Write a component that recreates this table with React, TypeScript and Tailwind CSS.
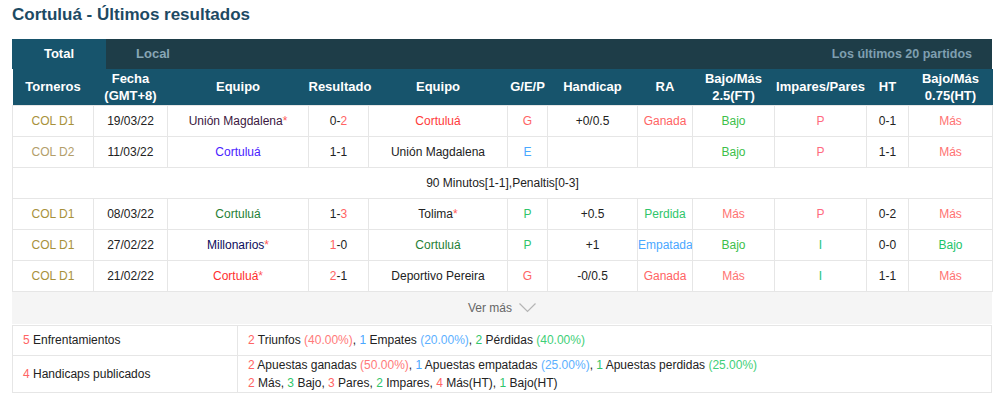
import React from "react";

type Cell = React.ReactNode;

const RED = "text-[#ff6464]";
const GREEN = "text-[#2fc56a]";
const BLUE = "text-[#4aa8ff]";

const cols = [81, 74, 141, 60, 139, 40, 90, 55, 82, 92, 42, 84];

function Star() {
  return <span className="text-[#ff5a5a]">*</span>;
}

interface Row {
  league: string;
  date: string;
  home: Cell;
  score: Cell;
  away: Cell;
  gep: Cell;
  handicap: string;
  ra: Cell;
  ou: Cell;
  oe: Cell;
  ht: string;
  ouHt: Cell;
  leagueColor: string;
}

const mas = <span className="text-[#ff7272]">Más</span>;
const bajo = <span className="text-[#3cbf4a]">Bajo</span>;

const rows: Row[] = [
  {
    league: "COL D1",
    leagueColor: "text-[#a8913a]",
    date: "19/03/22",
    home: (
      <span className="text-[#3b1740]">
        Unión Magdalena<Star />
      </span>
    ),
    score: (
      <>
        0-<span className={RED}>2</span>
      </>
    ),
    away: <span className="text-[#ff3a3a]">Cortuluá</span>,
    gep: <span className={RED}>G</span>,
    handicap: "+0/0.5",
    ra: <span className={RED}>Ganada</span>,
    ou: bajo,
    oe: <span className="text-[#ff6a80]">P</span>,
    ht: "0-1",
    ouHt: mas,
  },
  {
    league: "COL D2",
    leagueColor: "text-[#b39e6a]",
    date: "11/03/22",
    home: <span className="text-[#4a1cff]">Cortuluá</span>,
    score: "1-1",
    away: "Unión Magdalena",
    gep: <span className={BLUE}>E</span>,
    handicap: "",
    ra: "",
    ou: bajo,
    oe: <span className="text-[#ff6a80]">P</span>,
    ht: "1-1",
    ouHt: mas,
  },
];

const rows2: Row[] = [
  {
    league: "COL D1",
    leagueColor: "text-[#a8913a]",
    date: "08/03/22",
    home: <span className="text-[#1f8035]">Cortuluá</span>,
    score: (
      <>
        1-<span className={RED}>3</span>
      </>
    ),
    away: (
      <>
        Tolima<Star />
      </>
    ),
    gep: <span className={GREEN}>P</span>,
    handicap: "+0.5",
    ra: <span className={GREEN}>Perdida</span>,
    ou: mas,
    oe: <span className="text-[#ff6a80]">P</span>,
    ht: "0-2",
    ouHt: mas,
  },
  {
    league: "COL D1",
    leagueColor: "text-[#a8913a]",
    date: "27/02/22",
    home: (
      <span className="text-[#0c0c5c]">
        Millonarios<Star />
      </span>
    ),
    score: (
      <>
        <span className={RED}>1</span>-0
      </>
    ),
    away: <span className="text-[#1f8035]">Cortuluá</span>,
    gep: <span className={GREEN}>P</span>,
    handicap: "+1",
    ra: <span className={BLUE}>Empatada</span>,
    ou: bajo,
    oe: <span className="text-[#1cc47a]">I</span>,
    ht: "0-0",
    ouHt: <span className="text-[#1cc46a]">Bajo</span>,
  },
  {
    league: "COL D1",
    leagueColor: "text-[#a8913a]",
    date: "21/02/22",
    home: (
      <span className="text-[#ff2e2e]">
        Cortuluá<Star />
      </span>
    ),
    score: (
      <>
        <span className={RED}>2</span>-1
      </>
    ),
    away: "Deportivo Pereira",
    gep: <span className={RED}>G</span>,
    handicap: "-0/0.5",
    ra: <span className={RED}>Ganada</span>,
    ou: mas,
    oe: <span className="text-[#1cc47a]">I</span>,
    ht: "1-1",
    ouHt: mas,
  },
];

function DataRow({ r }: { r: Row }) {
  const cells: Cell[] = [
    <span className={r.leagueColor}>{r.league}</span>,
    r.date,
    r.home,
    r.score,
    r.away,
    r.gep,
    r.handicap,
    r.ra,
    r.ou,
    r.oe,
    r.ht,
    r.ouHt,
  ];
  return (
    <tr className="h-[31px]">
      {cells.map((c, i) => (
        <td key={i} className="border border-[#e6e6e6] text-center whitespace-nowrap overflow-hidden p-0">
          {c}
        </td>
      ))}
    </tr>
  );
}

const headers: Cell[] = [
  "Torneros",
  <>
    Fecha
    <br />
    (GMT+8)
  </>,
  "Equipo",
  "Resultado",
  "Equipo",
  "G/E/P",
  "Handicap",
  "RA",
  <>
    Bajo/Más
    <br />
    2.5(FT)
  </>,
  "Impares/Pares",
  "HT",
  <>
    Bajo/Más
    <br />
    0.75(HT)
  </>,
];

export default function App() {
  return (
    <div className="w-[1002px] h-[402px] bg-white px-3 text-[12px] text-[#222] font-['Liberation_Sans',Arial,sans-serif] overflow-hidden">
      <div className="h-[39px] pt-[3px]">
        <h2 className="text-[17px] font-bold leading-[24px] text-[#1d4a63]">Cortuluá - Últimos resultados</h2>
      </div>

      <div className="w-[980px] h-[30px] flex bg-[#1e3d48] text-[13px] font-bold">
        <div className="w-[94px] bg-[#17546c] text-white flex items-center justify-center">Total</div>
        <div className="w-[94px] text-[#87a6b5] flex items-center justify-center">Local</div>
        <div className="flex-1 flex items-center justify-end pr-[20px] text-[#7f9fb0] text-[12.5px]">
          Los últimos 20 partidos
        </div>
      </div>

      <table className="w-[980px] table-fixed border-collapse">
        <colgroup>
          {cols.map((w, i) => (
            <col key={i} style={{ width: w }} />
          ))}
        </colgroup>
        <thead>
          <tr className="h-[36px] bg-[#17546c] text-white text-[13px] font-bold leading-[17px]">
            {headers.map((h, i) => (
              <th key={i} className="p-0 text-center font-bold whitespace-nowrap">
                {h}
              </th>
            ))}
          </tr>
        </thead>
        <tbody>
          {rows.map((r, i) => (
            <DataRow key={i} r={r} />
          ))}
          <tr className="h-[31px]">
            <td colSpan={12} className="border border-[#e6e6e6] text-center p-0">
              90 Minutos[1-1],Penaltis[0-3]
            </td>
          </tr>
          {rows2.map((r, i) => (
            <DataRow key={i} r={r} />
          ))}
        </tbody>
      </table>

      <div className="w-[980px] h-[32px] bg-[#f5f5f5] flex items-center justify-center gap-[7px] text-[#666]">
        <span>Ver más</span>
        <svg width="17" height="10" viewBox="0 0 17 10" fill="none">
          <path d="M0.5 0.5 L8.5 8.5 L16.5 0.5" stroke="#b5b5b5" strokeWidth="1.2" />
        </svg>
      </div>

      <table className="w-[980px] table-fixed border-collapse mt-px">
        <colgroup>
          <col style={{ width: 225 }} />
          <col />
        </colgroup>
        <tbody>
          <tr className="h-[30px]">
            <td className="border border-[#e6e6e6] pl-[10px]">
              <span className={RED}>5</span> Enfrentamientos
            </td>
            <td className="border border-[#e6e6e6] pl-[10px]">
              <span className={RED}>2</span> Triunfos <span className="text-[#ff7a7a]">(40.00%)</span>,{" "}
              <span className={BLUE}>1</span> Empates <span className="text-[#5cb0ff]">(20.00%)</span>,{" "}
              <span className={GREEN}>2</span> Pérdidas <span className="text-[#3fcf78]">(40.00%)</span>
            </td>
          </tr>
          <tr className="h-[37px]">
            <td className="border border-[#e6e6e6] pl-[10px]">
              <span className={RED}>4</span> Handicaps publicados
            </td>
            <td className="border border-[#e6e6e6] pl-[10px] leading-[18px]">
              <div>
                <span className={RED}>2</span> Apuestas ganadas <span className="text-[#ff7a7a]">(50.00%)</span>,{" "}
                <span className={BLUE}>1</span> Apuestas empatadas <span className="text-[#5cb0ff]">(25.00%)</span>,{" "}
                <span className={GREEN}>1</span> Apuestas perdidas <span className="text-[#3fcf78]">(25.00%)</span>
              </div>
              <div>
                <span className={RED}>2</span> Más, <span className={GREEN}>3</span> Bajo,{" "}
                <span className={RED}>3</span> Pares, <span className={GREEN}>2</span> Impares,{" "}
                <span className={RED}>4</span> Más(HT), <span className={GREEN}>1</span> Bajo(HT)
              </div>
            </td>
          </tr>
        </tbody>
      </table>
    </div>
  );
}
